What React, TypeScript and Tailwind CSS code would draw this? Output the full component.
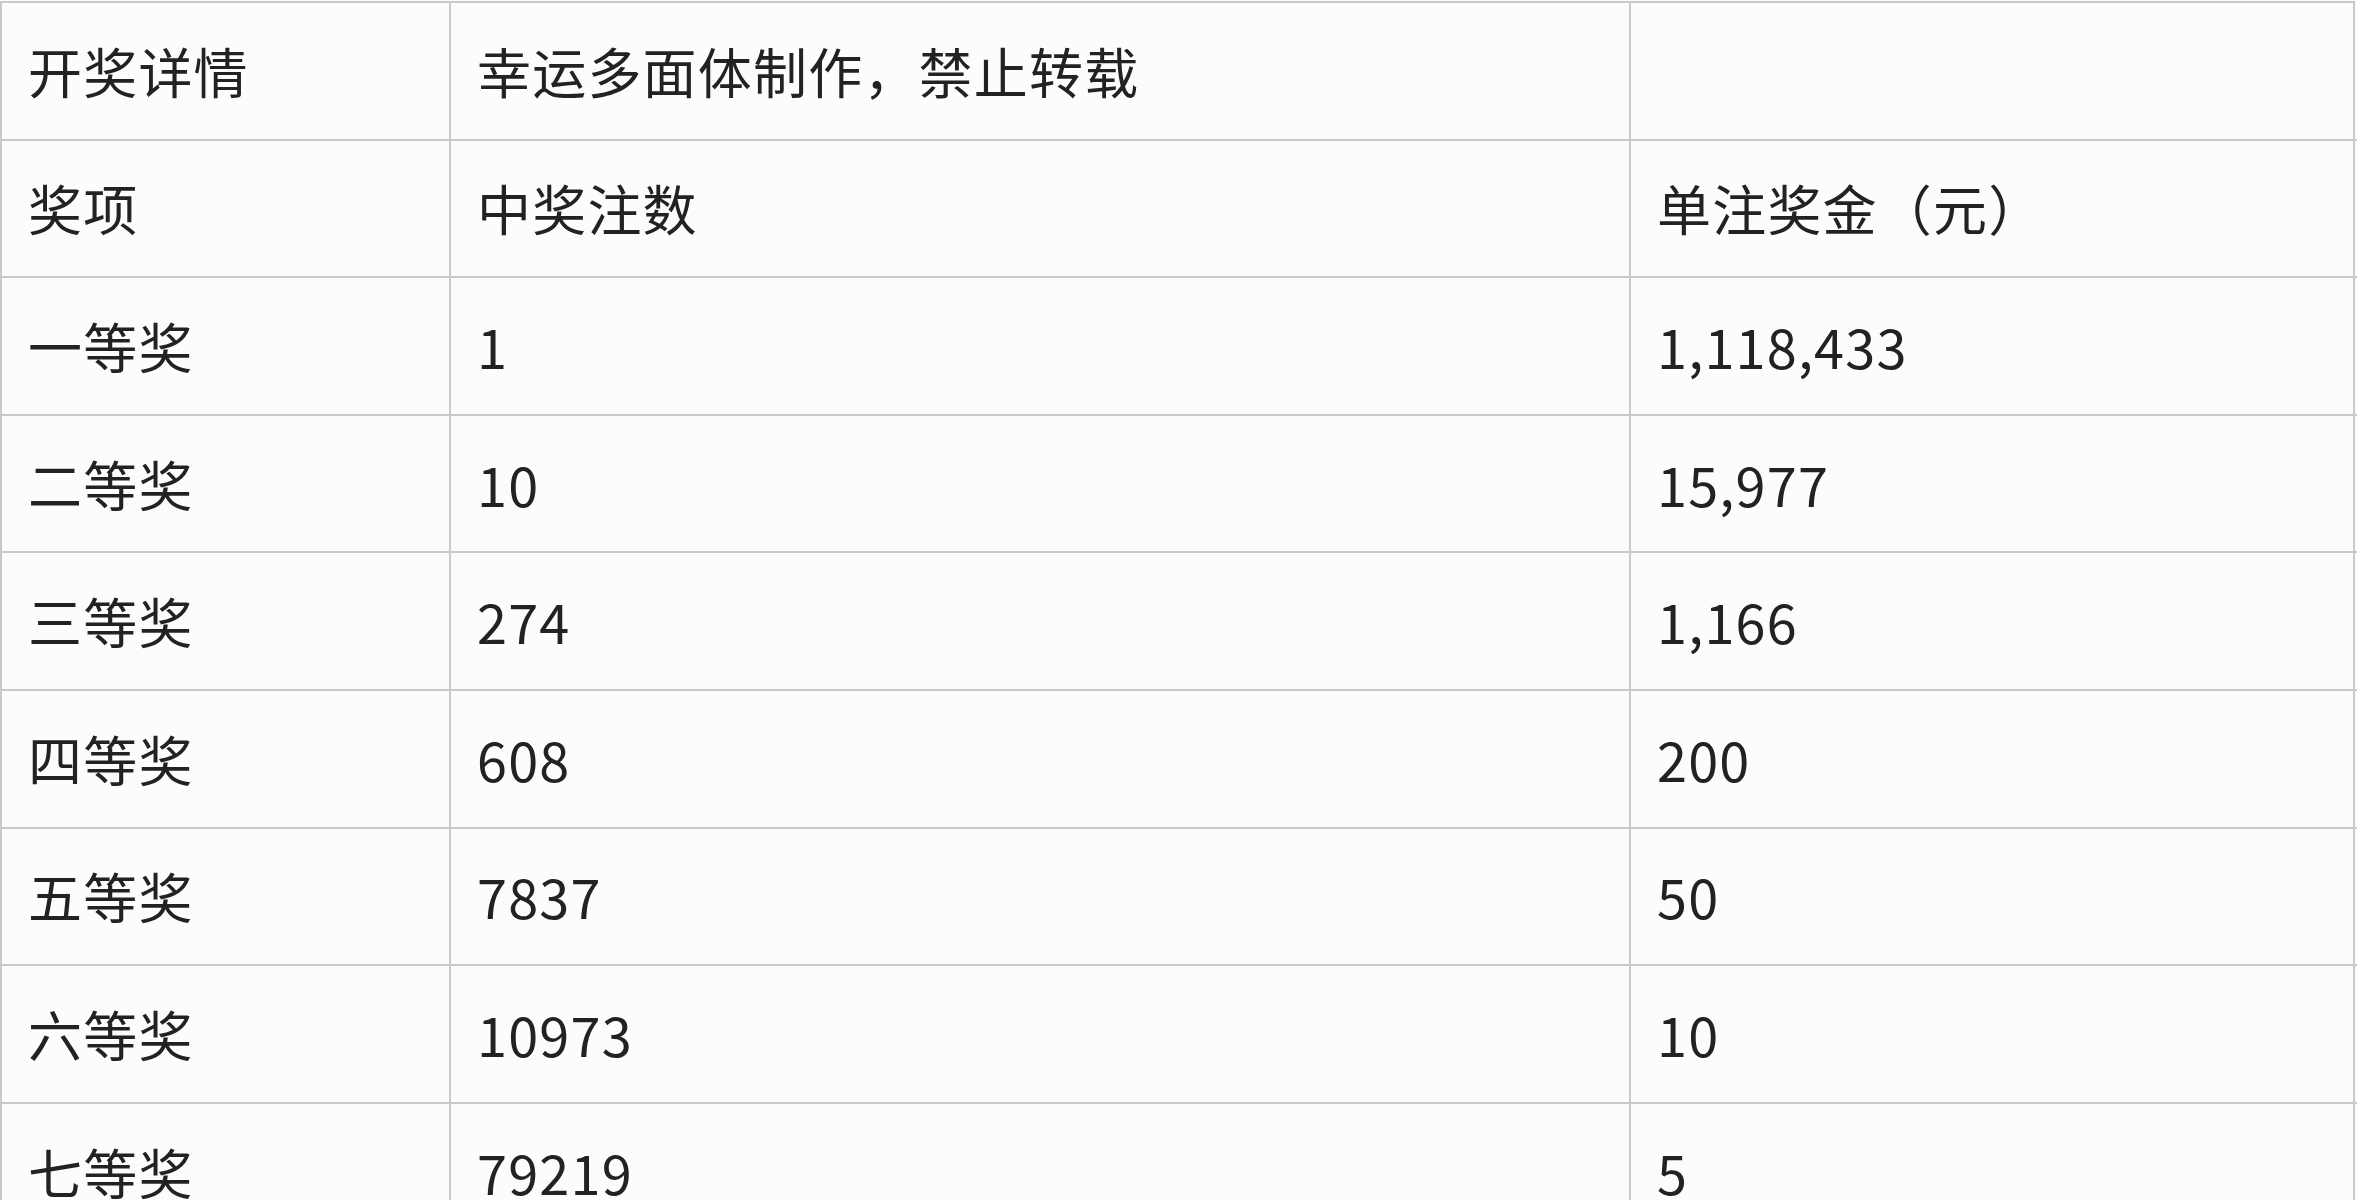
const rows: [string, string, string][] = [
  ["开奖详情", "幸运多面体制作，禁止转载", ""],
  ["奖项", "中奖注数", "单注奖金（元）"],
  ["一等奖", "1", "1,118,433"],
  ["二等奖", "10", "15,977"],
  ["三等奖", "274", "1,166"],
  ["四等奖", "608", "200"],
  ["五等奖", "7837", "50"],
  ["六等奖", "10973", "10"],
  ["七等奖", "79219", "5"],
];

const Cell = ({ text, last }: { text: string; last?: boolean }) => (
  <div
    className={`flex items-center h-[137.6px] pl-[26px] border-b-2 border-[#c9c9cb] ${
      last ? "" : "border-r-2"
    }`}
  >
    <span className="whitespace-nowrap tracking-[1.2px]">{text}</span>
  </div>
);

export default function App() {
  return (
    <div className="w-[2357px] h-[1200px] overflow-hidden bg-[#fcfcfd] pt-[1px]">
      <div
        className="grid grid-cols-[449px_1180px_726px] w-[2355px] border-t-2 border-l-2 border-r-2 border-[#c9c9cb] text-[54px] leading-none font-normal text-[#222222]"
        style={{ fontFamily: '"Noto Sans CJK SC", "Noto Sans", sans-serif' }}
      >
        {rows.map((r, i) => (
          <div key={i} className="contents">
            <Cell text={r[0]} />
            <Cell text={r[1]} />
            <Cell text={r[2]} last />
          </div>
        ))}
      </div>
    </div>
  );
}
